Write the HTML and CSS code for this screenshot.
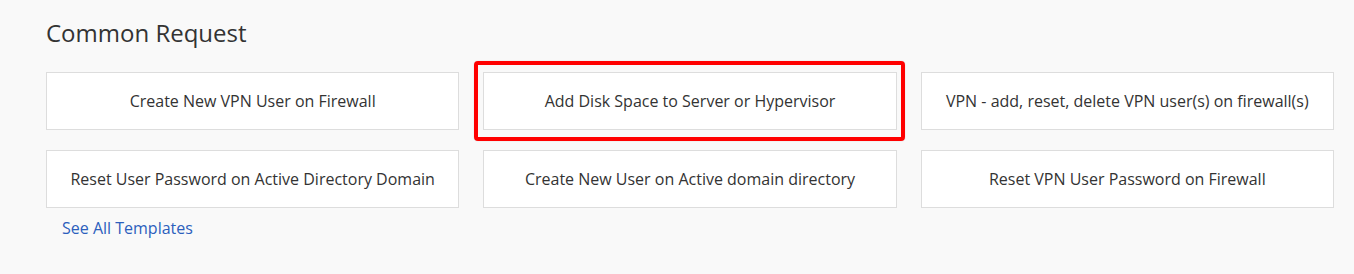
FILE: index.html
```html
<!DOCTYPE html>
<html lang="en">
<head>
  <meta charset="UTF-8" />
  <meta name="viewport" content="width=device-width, initial-scale=1.0"/>
  <title>Common Request</title>
  <link rel="stylesheet" href="styles.css">
</head>
<body>
  <div class="section">
    <h2 class="section-title">Common Request</h2>
    <div class="requests">
      <a class="request" href="#">Create New VPN User on Firewall</a>
      <a class="request highlighted" href="#">Add Disk Space to Server or Hypervisor</a>
      <a class="request" href="#">VPN - add, reset, delete VPN user(s) on firewall(s)</a>
      <a class="request" href="#">Reset User Password on Active Directory Domain</a>
      <a class="request" href="#">Create New User on Active domain directory</a>
      <a class="request" href="#">Reset VPN User Password on Firewall</a>
    </div>
    <a class="see-all" href="#">See All Templates</a>
  </div>
</body>
</html>
```

FILE: styles.css
```css
html, body {
  margin: 0;
  padding: 0;
  height: 100%;
  font-family: 'Open Sans', sans-serif;
  background: #f9f9f9;
  color: #333;
}

.section {
  padding: 17px 20px 0 46px;
}

.section-title {
  margin: 0 0 23px;
  font-size: 24px;
  font-weight: 400;
  line-height: 32px;
  color: #333;
}

.requests {
  display: grid;
  grid-template-columns: repeat(3, 1fr);
  column-gap: 24px;
  row-gap: 20px;
}

.request {
  position: relative;
  display: flex;
  align-items: center;
  justify-content: center;
  height: 56px;
  background: #fff;
  border: 1px solid #ddd;
  color: #333;
  font-size: 16px;
  text-decoration: none;
}

/* annotation box drawn around the selected template */
.request.highlighted::after {
  content: '';
  position: absolute;
  top: -12px;
  bottom: -12px;
  left: -10px;
  right: -9px;
  border: 4px solid #ff0000;
  border-radius: 4px;
  box-shadow: 0 0 1px rgba(0,0,0,0.3);
}

.see-all {
  display: inline-block;
  margin: 9px 0 0 16px;
  color: #2c5fbd;
  font-size: 16px;
  text-decoration: none;
}
```
